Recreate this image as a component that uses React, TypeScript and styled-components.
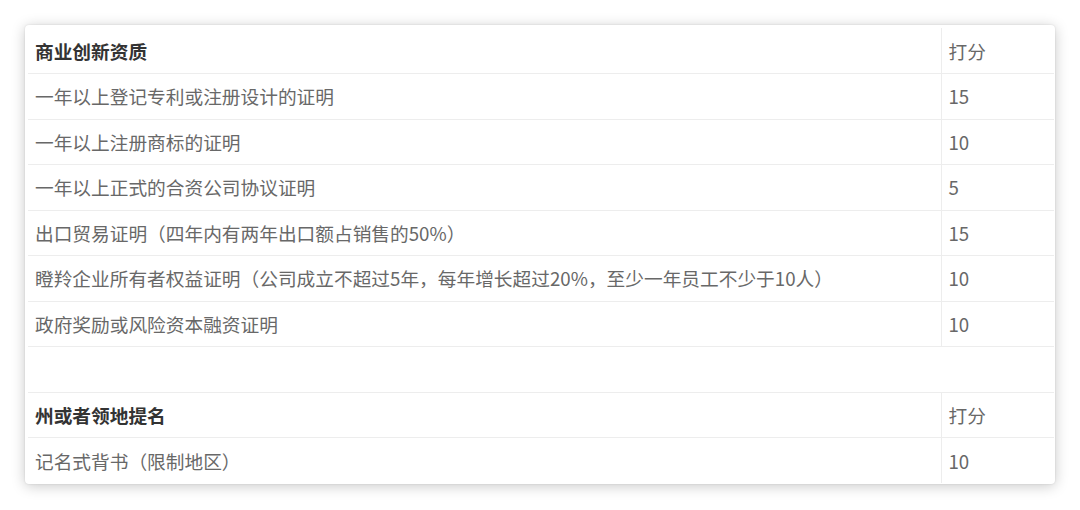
import React from "react";
import styled, { createGlobalStyle } from "styled-components";

const GlobalStyle = createGlobalStyle`
  html, body {
    margin: 0;
    padding: 0;
    background: #ffffff;
  }
  body {
    font-family: "Noto Sans CJK SC", "Noto Sans", sans-serif;
  }
`;

type Row = { label: string; score: string; head?: boolean };

const rows: Row[] = [
  { label: "商业创新资质", score: "打分", head: true },
  { label: "一年以上登记专利或注册设计的证明", score: "15" },
  { label: "一年以上注册商标的证明", score: "10" },
  { label: "一年以上正式的合资公司协议证明", score: "5" },
  { label: "出口贸易证明（四年内有两年出口额占销售的50%）", score: "15" },
  {
    label:
      "瞪羚企业所有者权益证明（公司成立不超过5年，每年增长超过20%，至少一年员工不少于10人）",
    score: "10",
  },
  { label: "政府奖励或风险资本融资证明", score: "10" },
  { label: "", score: "" },
  { label: "州或者领地提名", score: "打分", head: true },
  { label: "记名式背书（限制地区）", score: "10" },
];

const App: React.FC = () => (
  <>
    <GlobalStyle />
    <Page>
      <Card>
        <Table>
          <tbody>
            {rows.map((row, i) => (
              <tr key={i}>
                {row.label === "" && row.score === "" ? (
                  <td colSpan={2} />
                ) : (
                  <>
                    <LabelCell $head={row.head}>{row.label}</LabelCell>
                    <ScoreCell>{row.score}</ScoreCell>
                  </>
                )}
              </tr>
            ))}
          </tbody>
        </Table>
      </Card>
    </Page>
  </>
);

const Page = styled.div`
  padding: 25px;
  width: 1030px;
`;

const Card = styled.div`
  background: #ffffff;
  border-radius: 4px;
  padding: 3px 1px 1px 3px;
  box-shadow: 0 2px 14px rgba(0, 0, 0, 0.22), 0 0 2px rgba(0, 0, 0, 0.12);
`;

const Table = styled.table`
  width: 100%;
  border-collapse: collapse;
  table-layout: fixed;

  tr {
    height: 45.5px;
  }
  td {
    padding: 0;
  }
  tr + tr td {
    border-top: 1px solid #ededed;
  }
`;

const LabelCell = styled.td<{ $head?: boolean }>`
  width: 913px;
  box-sizing: border-box;
  && {
    padding: 0 0 0 7px;
  }
  font-size: 18.7px;
  line-height: 24px;
  color: ${(p) => (p.$head ? "#333333" : "#686868")};
  font-weight: ${(p) => (p.$head ? 700 : 400)};
  border-right: 1px solid #ededed;
  white-space: nowrap;
`;

const ScoreCell = styled.td`
  && {
    padding: 0 0 0 7px;
  }
  font-size: 18.7px;
  line-height: 24px;
  color: #686868;
`;

export default App;
